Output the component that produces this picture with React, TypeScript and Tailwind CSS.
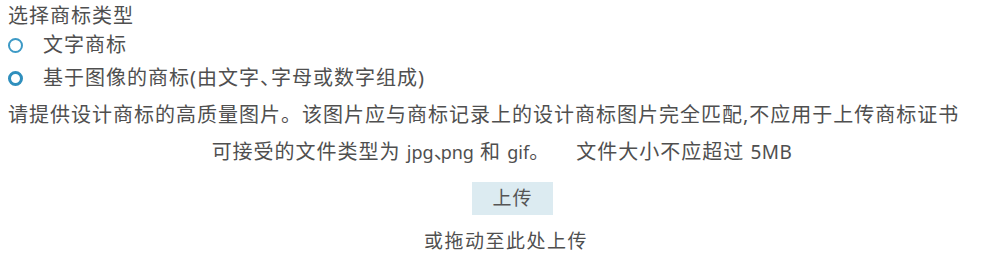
export default function App() {
  return (
    <div
      className="w-[990px] h-[254px] bg-white overflow-hidden px-[8px] pt-[4px] text-[#4f4f4f] text-[20px] tracking-[1px]"
      style={{ fontFamily: '"Noto Sans", "Noto Sans CJK SC", sans-serif' }}
    >
      {/* Trademark type */}
      <div className="h-[24px] leading-[24px]">选择商标类型</div>

      <label className="mt-[3px] h-[28px] flex items-center gap-[20px]">
        <span className="w-[15px] h-[15px] rounded-full border-[2.5px] border-[#3d9ac6] shrink-0" />
        <span>文字商标</span>
      </label>

      <label className="mt-[5px] h-[28px] flex items-center gap-[20px]">
        <span className="w-[15px] h-[15px] rounded-full border-[3px] border-[#2f8fbd] shrink-0" />
        <span>
          基于图像的商标(由文字<span className="tracking-[-9px]">、</span>字母或数字组成)
        </span>
      </label>

      <p className="mt-[9px] h-[28px] leading-[28px] whitespace-nowrap">
        请提供设计商标的高质量图片。该图片应与商标记录上的设计商标图片完全匹配,不应用于上传商标证书
      </p>

      {/* Upload */}
      <p className="mt-[9px] h-[28px] leading-[28px] text-center pl-[14px] whitespace-nowrap">
        可接受的文件类型为 <span className="text-[18px] tracking-[0px]">jpg</span>
        <span className="tracking-[-13px]">、</span>
        <span className="text-[18px] tracking-[0px]">png</span> 和{' '}
        <span className="text-[18px] tracking-[0px]">gif</span>。
        <span className="inline-block w-[26px]" />
        文件大小不应超过 <span className="text-[19px] tracking-[0.5px]">5MB</span>
      </p>

      <div className="mt-[16px] flex justify-center pl-[35px]">
        <button className="w-[81px] h-[33px] bg-[#dcebf1] text-[#555] text-[19px]">
          上传
        </button>
      </div>

      <p className="mt-[12px] h-[28px] leading-[28px] text-center pl-[22px] text-[19px] tracking-[1.5px]">
        或拖动至此处上传
      </p>
    </div>
  )
}
